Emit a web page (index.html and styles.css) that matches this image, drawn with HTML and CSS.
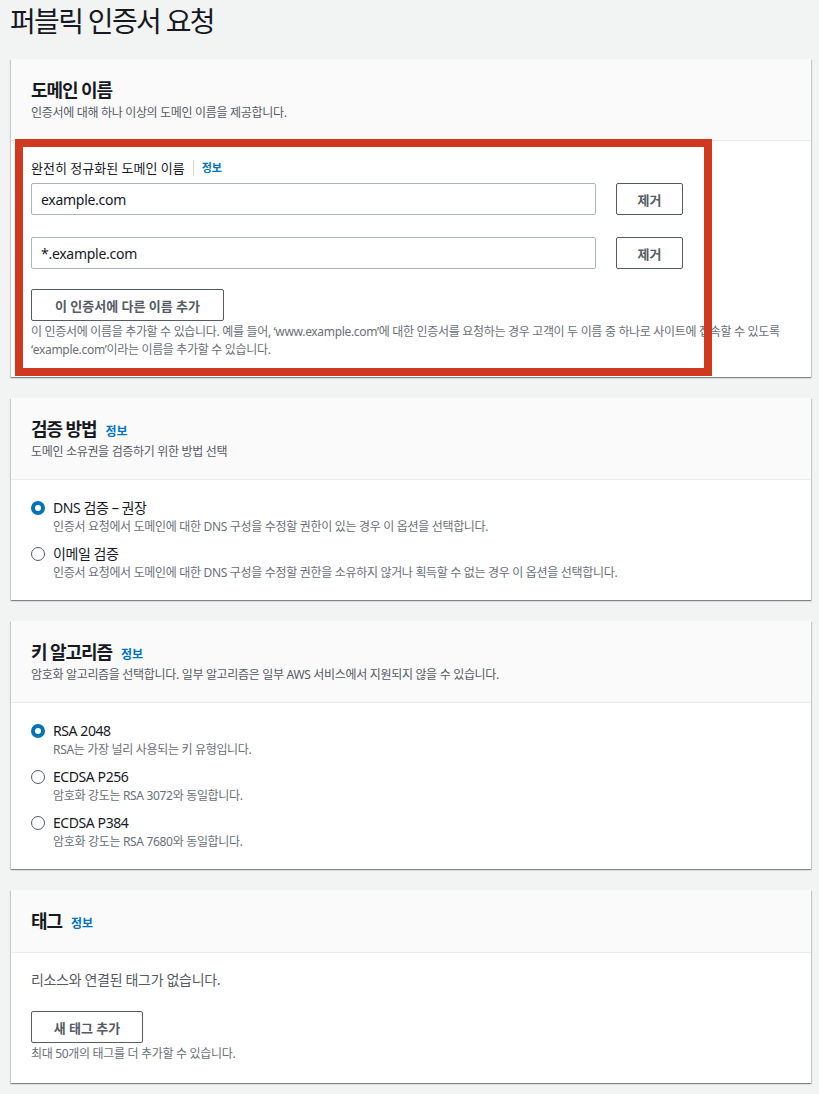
FILE: index.html
```html
<!DOCTYPE html>
<html lang="ko">
<head>
    <meta charset="UTF-8">
    <title>퍼블릭 인증서 요청</title>
    <link rel="stylesheet" href="styles.css">
</head>
<body>
    <h1 class="page-title">퍼블릭 인증서 요청</h1>

    <!-- Domain names -->
    <div class="panel">
        <div class="panel-header">
            <h2>도메인 이름</h2>
            <p class="panel-desc">인증서에 대해 하나 이상의 도메인 이름을 제공합니다.</p>
        </div>
        <div class="panel-body">
            <div class="field-label">
                <span>완전히 정규화된 도메인 이름</span>
                <span class="divider"></span>
                <a href="#" class="info-link">정보</a>
            </div>
            <div class="domain-rows">
                <div class="domain-row">
                    <input class="text-input" type="text" value="example.com">
                    <button class="btn">제거</button>
                </div>
                <div class="domain-row">
                    <input class="text-input" type="text" value="*.example.com">
                    <button class="btn">제거</button>
                </div>
            </div>
            <button class="btn btn-wide">이 인증서에 다른 이름 추가</button>
            <p class="help-text">이 인증서에 이름을 추가할 수 있습니다. 예를 들어, ‘www.example.com’에 대한 인증서를 요청하는 경우 고객이 두 이름 중 하나로 사이트에 접속할 수 있도록 ‘example.com’이라는 이름을 추가할 수 있습니다.</p>
        </div>
        <div class="highlight-box"></div>
    </div>

    <!-- Validation method -->
    <div class="panel">
        <div class="panel-header">
            <h2>검증 방법 <a href="#" class="info-link">정보</a></h2>
            <p class="panel-desc">도메인 소유권을 검증하기 위한 방법 선택</p>
        </div>
        <div class="panel-body radio-group">
            <label class="radio-item">
                <span class="radio checked"></span>
                <span class="radio-text">
                    <span class="radio-label">DNS 검증 – 권장</span>
                    <span class="radio-desc">인증서 요청에서 도메인에 대한 DNS 구성을 수정할 권한이 있는 경우 이 옵션을 선택합니다.</span>
                </span>
            </label>
            <label class="radio-item">
                <span class="radio"></span>
                <span class="radio-text">
                    <span class="radio-label">이메일 검증</span>
                    <span class="radio-desc">인증서 요청에서 도메인에 대한 DNS 구성을 수정할 권한을 소유하지 않거나 획득할 수 없는 경우 이 옵션을 선택합니다.</span>
                </span>
            </label>
        </div>
    </div>

    <!-- Key algorithm -->
    <div class="panel">
        <div class="panel-header">
            <h2>키 알고리즘 <a href="#" class="info-link">정보</a></h2>
            <p class="panel-desc">암호화 알고리즘을 선택합니다. 일부 알고리즘은 일부 AWS 서비스에서 지원되지 않을 수 있습니다.</p>
        </div>
        <div class="panel-body radio-group">
            <label class="radio-item">
                <span class="radio checked"></span>
                <span class="radio-text">
                    <span class="radio-label">RSA 2048</span>
                    <span class="radio-desc">RSA는 가장 널리 사용되는 키 유형입니다.</span>
                </span>
            </label>
            <label class="radio-item">
                <span class="radio"></span>
                <span class="radio-text">
                    <span class="radio-label">ECDSA P256</span>
                    <span class="radio-desc">암호화 강도는 RSA 3072와 동일합니다.</span>
                </span>
            </label>
            <label class="radio-item">
                <span class="radio"></span>
                <span class="radio-text">
                    <span class="radio-label">ECDSA P384</span>
                    <span class="radio-desc">암호화 강도는 RSA 7680와 동일합니다.</span>
                </span>
            </label>
        </div>
    </div>

    <!-- Tags -->
    <div class="panel">
        <div class="panel-header">
            <h2>태그 <a href="#" class="info-link">정보</a></h2>
        </div>
        <div class="panel-body tag-body">
            <p class="empty-text">리소스와 연결된 태그가 없습니다.</p>
            <button class="btn btn-tag">새 태그 추가</button>
            <p class="help-text">최대 50개의 태그를 더 추가할 수 있습니다.</p>
        </div>
    </div>
</body>
</html>
```

FILE: styles.css
```css
body {
    font-family: "Noto Sans", "Noto Sans CJK KR", sans-serif;
    margin: 0;
    padding: 0 8px 0 11px;
    background-color: #f2f3f3;
    color: #16191f;
    letter-spacing: -0.02em;
}

.page-title {
    font-size: 28px;
    font-weight: normal;
    line-height: 36px;
    letter-spacing: -0.06em;
    margin: 0 0 20px -1px;
    padding-top: 3px;
}

.panel {
    position: relative;
    width: 800px;
    background-color: #fff;
    box-shadow: 0 1px 1px 0 rgba(0, 28, 36, 0.3), 1px 1px 1px 0 rgba(0, 28, 36, 0.15), -1px 1px 1px 0 rgba(0, 28, 36, 0.15);
    margin-bottom: 21px;
}

.panel-header {
    background-color: #fafafa;
    border-bottom: 1px solid #eaeded;
    padding: 19px 20px 19px;
}

.panel-header h2 {
    display: flex;
    align-items: baseline;
    gap: 9px;
    font-size: 18px;
    font-weight: bold;
    line-height: 24px;
    letter-spacing: -0.06em;
    margin: 0;
}

.panel-desc {
    font-size: 12px;
    line-height: 16px;
    color: #545b64;
    margin: 3px 0 0 0;
}

.info-link {
    font-size: 12px;
    font-weight: bold;
    line-height: 16px;
    color: #0073bb;
    text-decoration: none;
    letter-spacing: 0;
}

.panel-body {
    padding: 18px 20px;
}

.tag-body {
    padding-bottom: 20px;
}

.field-label {
    display: flex;
    align-items: center;
    font-size: 13px;
    line-height: 18px;
    letter-spacing: 0;
}

.field-label .divider {
    width: 1px;
    height: 16px;
    background-color: #d5dbdb;
    margin: 0 8px;
}

.field-label .info-link {
    font-size: 11px;
}

.domain-rows {
    display: flex;
    flex-direction: column;
    gap: 22px;
    margin: 6px 0 20px;
}

.domain-row {
    display: flex;
    gap: 20px;
}

.text-input {
    width: 565px;
    height: 32px;
    box-sizing: border-box;
    border: 1px solid #aab7b8;
    border-radius: 2px;
    padding: 0 9px;
    font-family: inherit;
    font-size: 14px;
    letter-spacing: -0.02em;
    color: #16191f;
}

.btn {
    height: 32px;
    box-sizing: border-box;
    background-color: #fff;
    border: 1px solid #545b64;
    border-radius: 2px;
    font-family: inherit;
    font-size: 13px;
    font-weight: bold;
    color: #545b64;
    letter-spacing: 0;
    padding: 0 20px;
}

.domain-row .btn {
    width: 67px;
    padding: 0;
}

.btn-wide {
    width: 193px;
    padding: 0;
}

.btn-tag {
    width: 112px;
    padding: 0;
}

.help-text {
    font-size: 12px;
    line-height: 18px;
    color: #687078;
    margin: 2px 0 0 0;
}

.empty-text {
    font-size: 14px;
    line-height: 18px;
    color: #545b64;
    margin: 0 0 22px 0;
}

.highlight-box {
    position: absolute;
    left: 4px;
    top: 80px;
    width: 697px;
    height: 237px;
    box-sizing: border-box;
    border: 8px solid #d0391f;
}

.radio-group {
    display: flex;
    flex-direction: column;
    gap: 8px;
}

.radio-item {
    display: flex;
    gap: 8px;
}

.radio {
    width: 14px;
    height: 14px;
    box-sizing: border-box;
    border: 1.5px solid #545b64;
    border-radius: 50%;
    margin-top: 3px;
    flex-shrink: 0;
}

.radio.checked {
    border: 4px solid #0073bb;
}

.radio-text {
    display: flex;
    flex-direction: column;
}

.radio-label {
    font-size: 14px;
    line-height: 20px;
    letter-spacing: -0.03em;
}

.radio-desc {
    font-size: 12px;
    line-height: 18px;
    color: #687078;
}
```
